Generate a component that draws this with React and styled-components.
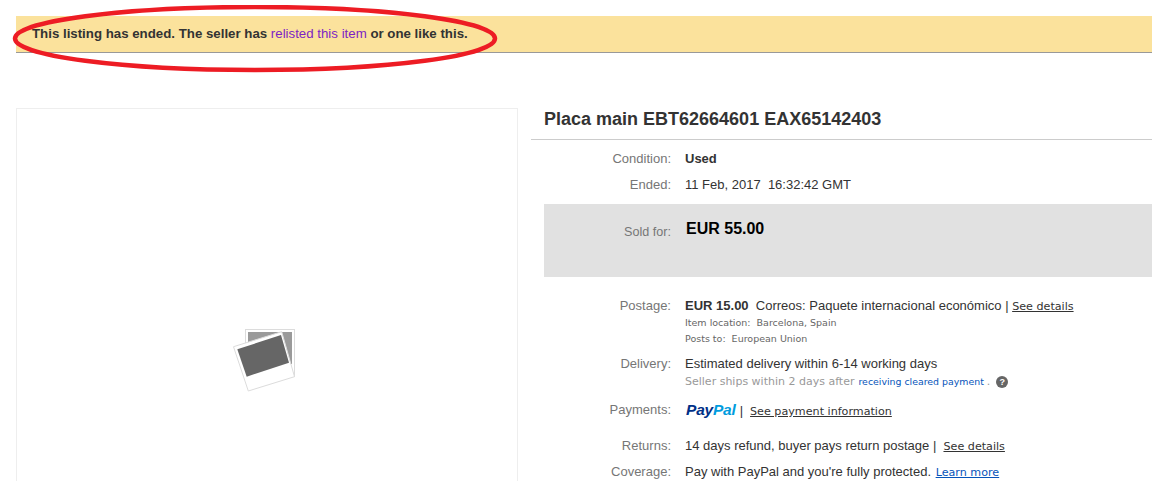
import React from "react";
import styled, { createGlobalStyle } from "styled-components";

const Global = createGlobalStyle`
  html, body {
    margin: 0;
    padding: 0;
    background: #fff;
    overflow: hidden;
  }
  body {
    font-family: "Liberation Sans", Arial, sans-serif;
    color: #333;
  }
`;

export default function App() {
  return (
    <Page>
      <Global />
      <Banner>
        <strong>This listing has ended. The seller has</strong>{" "}
        <BannerLink>relisted this item</BannerLink>{" "}
        <strong>or one like this.</strong>
      </Banner>
      <RedEllipse viewBox="0 0 500 70" aria-hidden="true">
        <ellipse cx="248" cy="33.5" rx="240" ry="31.5" fill="none" stroke="#ed1c24" strokeWidth="4.5" />
      </RedEllipse>

      <Main>
        <Gallery>
          <PhotoIcon viewBox="233 329 62 63" aria-hidden="true">
            <rect x="245.5" y="329.5" width="49" height="47" fill="#fff" stroke="#dcdcdc" />
            <rect x="248" y="332" width="44" height="32" fill="#9a9a9a" />
            <polygon points="233.5,346.7 281.7,331.7 294.5,376.7 248.3,391" fill="#fff" stroke="#dcdcdc" />
            <polygon points="237.3,349.3 281,335 289,362.7 246.7,376.7" fill="#666" />
          </PhotoIcon>
        </Gallery>

        <Details>
          <Title>Placa main EBT62664601 EAX65142403</Title>
          <Info>
            <Row $height={26}>
              <Label>Condition:</Label>
              <Value><strong>Used</strong></Value>
            </Row>
            <Row $height={26}>
              <Label>Ended:</Label>
              <Value>11 Feb, 2017&nbsp;&nbsp;16:32:42 GMT</Value>
            </Row>

            <SoldBox>
              <SoldLabel>Sold for:</SoldLabel>
              <Price>EUR 55.00</Price>
            </SoldBox>

            <Row $height={58}>
              <Label>Postage:</Label>
              <Value>
                <strong>EUR 15.00</strong>&nbsp;&nbsp;Correos: Paquete internacional económico |{" "}
                <SmallLink>See details</SmallLink>
                <SubLines>
                  <SubLine>Item location:&nbsp;&nbsp;Barcelona, Spain</SubLine>
                  <SubLine>Posts to:&nbsp;&nbsp;European Union</SubLine>
                </SubLines>
              </Value>
            </Row>
            <Row $height={46}>
              <Label>Delivery:</Label>
              <Value>
                Estimated delivery within 6-14 working days
                <Ships>
                  Seller ships within 2 days after <BlueText>receiving cleared payment</BlueText> .
                  <HelpDot>?</HelpDot>
                </Ships>
              </Value>
            </Row>
            <Row $height={36}>
              <Label>Payments:</Label>
              <Value>
                <PayPalLogo>
                  <em>Pay</em><b>Pal</b>
                </PayPalLogo>
                <Pipe>|</Pipe>
                <SmallLink>See payment information</SmallLink>
              </Value>
            </Row>
            <Row $height={26}>
              <Label>Returns:</Label>
              <Value>
                14 days refund, buyer pays return postage |&nbsp;&nbsp;
                <SmallLink>See details</SmallLink>
              </Value>
            </Row>
            <Row $height={26}>
              <Label>Coverage:</Label>
              <Value>
                Pay with PayPal and you're fully protected. <BlueSmallLink>Learn more</BlueSmallLink>
              </Value>
            </Row>
          </Info>
        </Details>
      </Main>
    </Page>
  );
}

const Page = styled.div`
  position: relative;
  width: 1152px;
  height: 481px;
  overflow: hidden;
  padding: 16px 0 0 16px;
  box-sizing: border-box;
`;
const Banner = styled.div`
  height: 36px;
  box-sizing: content-box;
  background-color: #fbe29c;
  border-bottom: 1px solid #999;
  padding-left: 16px;
  line-height: 36px;
  font-size: 13.27px;
  color: #333;
`;
const BannerLink = styled.span`
  color: #7d1fc4;
`;
const RedEllipse = styled.svg`
  position: absolute;
  left: 7px;
  top: 5px;
  width: 500px;
  height: 70px;
`;
const Main = styled.div`
  display: flex;
  margin-top: 55px;
`;
const Gallery = styled.div`
  width: 502px;
  height: 500px;
  flex-shrink: 0;
  border: 1px solid #eee;
  display: flex;
  justify-content: center;
  align-items: flex-start;
  padding: 220px 6px 0 0;
  box-sizing: border-box;
`;
const PhotoIcon = styled.svg`
  width: 62px;
  height: 63px;
`;
const Details = styled.div`
  flex: 1;
  margin-left: 13px;
`;
const Title = styled.h1`
  margin: 0;
  height: 31px;
  padding-left: 13px;
  border-bottom: 1px solid #ccc;
  font-size: 18px;
  line-height: 22px;
  font-weight: bold;
  color: #333;
`;
const Info = styled.div`
  padding: 6px 0 0 13px;
`;
const Row = styled.div`
  display: grid;
  grid-template-columns: 127px 1fr;
  column-gap: 14px;
  height: ${(props) => props.$height}px;
  font-size: 13px;
  line-height: 26px;
`;
const Label = styled.div`
  text-align: right;
  color: #767676;
`;
const Value = styled.div`
  color: #333;
  white-space: nowrap;
`;
const SoldBox = styled.div`
  display: grid;
  grid-template-columns: 127px 1fr;
  column-gap: 14px;
  height: 73px;
  margin: 6px 0 16px;
  padding-top: 15px;
  box-sizing: border-box;
  background-color: #e1e1e1;
`;
const SoldLabel = styled(Label)`
  font-size: 12.6px;
  line-height: 24px;
  padding-top: 1px;
`;
const Price = styled.div`
  font-size: 16px;
  line-height: 20px;
  font-weight: bold;
  color: #000;
  padding-left: 1px;
`;
const SmallLink = styled.span`
  font-family: "DejaVu Sans", Verdana, sans-serif;
  font-size: 11.15px;
  color: #333;
  text-decoration: underline;
`;
const BlueSmallLink = styled(SmallLink)`
  color: #0654ba;
  margin-left: 1px;
`;
const SubLines = styled.div`
  margin-top: -5px;
`;
const SubLine = styled.div`
  font-family: "DejaVu Sans", Verdana, sans-serif;
  font-size: 9.5px;
  line-height: 16px;
  color: #666;
`;
const Ships = styled.div`
  display: flex;
  align-items: center;
  font-family: "DejaVu Sans", Verdana, sans-serif;
  font-size: 11px;
  line-height: 14px;
  color: #999;
  margin-top: -2px;
`;
const BlueText = styled.span`
  font-size: 9.4px;
  color: #0654ba;
  margin: 0 3px 0 4px;
`;
const HelpDot = styled.span`
  width: 12px;
  height: 12px;
  margin-left: 6px;
  border-radius: 50%;
  background-color: #666;
  color: #fff;
  font-family: "Liberation Sans", Arial, sans-serif;
  font-size: 9px;
  font-weight: bold;
  line-height: 12px;
  text-align: center;
`;
const PayPalLogo = styled.span`
  font-family: "Liberation Sans", Arial, sans-serif;
  font-size: 15.5px;
  font-weight: bold;
  font-style: italic;
  letter-spacing: -0.2px;
  margin-left: 1px;
  em {
    color: #003087;
  }
  b {
    color: #009cde;
  }
`;
const Pipe = styled.span`
  margin: 0 7px 0 4px;
  color: #333;
`;
